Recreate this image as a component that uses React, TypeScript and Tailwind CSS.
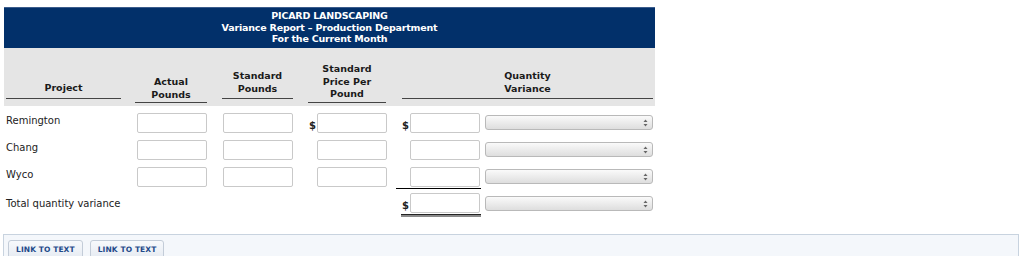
import React from "react";

const cols = "grid grid-cols-[127px_84px_85px_96px_259px]";

function Field({ className = "" }: { className?: string }) {
  return (
    <div
      className={`h-[20px] w-[70px] rounded-[2px] border border-[#c9c9c9] bg-white ${className}`}
    />
  );
}

function Dropdown() {
  return (
    <div className="relative ml-[4px] h-[15px] w-[168px] rounded-[3px] border border-[#b9b9b9] bg-gradient-to-b from-[#fafafa] via-[#ececec] to-[#dedede]">
      <svg
        className="absolute right-[4px] top-[3px]"
        width="5"
        height="8"
        viewBox="0 0 5 8"
      >
        <path d="M0.5 3 L2.5 0.5 L4.5 3 Z" fill="#666" />
        <path d="M0.5 5 L2.5 7.5 L4.5 5 Z" fill="#666" />
      </svg>
    </div>
  );
}

function Dollar() {
  return <span className="w-[8px] pt-[6px] text-[10px] font-semibold leading-none">$</span>;
}

type Row = { name: string; first?: boolean; last?: boolean };

const rows: Row[] = [
  { name: "Remington", first: true },
  { name: "Chang" },
  { name: "Wyco", last: true },
];

export default function App() {
  return (
    <div
      className="relative h-[256px] w-[1024px] overflow-hidden bg-white text-[#222]"
      style={{ fontFamily: '"DejaVu Sans", Verdana, sans-serif' }}
    >
      <div className="ml-[4px] pt-[7px] w-[651px]">
        {/* report title */}
        <div className="flex h-[41px] flex-col items-center border-t border-[#3b5c8c] bg-[#02306a] pt-[2px] text-[9.5px] font-bold leading-[11.5px] text-white tracking-[-0.2px]">
          <span>PICARD LANDSCAPING</span>
          <span>Variance Report – Production Department</span>
          <span>For the Current Month</span>
        </div>

        {/* column headings */}
        <div className={`${cols} h-[58px] bg-[#e5e5e5] text-[9.5px] font-bold leading-[12.5px] text-[#1a1a1a]`}>
          <div className="flex flex-col justify-start pt-[34px]">
            <div className="ml-[2px] w-[115px] border-b border-[#444] pb-[3px] text-center">
              Project
            </div>
          </div>
          <div className="flex flex-col pt-[28px]">
            <div className="ml-[4px] w-[72px] border-b border-[#444] pb-[1px] text-center">
              Actual
              <br />
              Pounds
            </div>
          </div>
          <div className="flex flex-col pt-[22px]">
            <div className="ml-[7px] w-[71px] border-b border-[#444] pb-[3px] text-center">
              Standard
              <br />
              Pounds
            </div>
          </div>
          <div className="flex flex-col pt-[15px]">
            <div className="ml-[8px] w-[78px] border-b border-[#444] pb-[1px] text-center">
              Standard
              <br />
              Price Per
              <br />
              Pound
            </div>
          </div>
          <div className="flex flex-col pt-[22px]">
            <div className="ml-[6px] w-[251px] border-b border-[#444] pb-[3px] text-center">
              Quantity
              <br />
              Variance
            </div>
          </div>
        </div>

        {/* data rows */}
        <div className="pt-[3px] text-[10px]">
          {rows.map((r) => (
            <div key={r.name} className={`${cols} h-[27px] items-center`}>
              <div className="pl-[2px] pb-[4px]">{r.name}</div>
              <div className="pl-[6px]">
                <Field />
              </div>
              <div className="pl-[8px]">
                <Field />
              </div>
              <div className="flex items-center pl-[9px]">
                {r.first ? <Dollar /> : <span className="w-[8px]" />}
                <Field className="w-[68px]" />
              </div>
              <div className="flex items-center">
                <div
                  className={`flex items-center pl-[6px] ${
                    r.last ? "border-b border-black pb-[1px] pt-[2px]" : ""
                  } w-[85px]`}
                >
                  {r.first ? <Dollar /> : <span className="w-[8px]" />}
                  <Field />
                </div>
                <Dropdown />
              </div>
            </div>
          ))}

          <div className={`${cols} h-[27px] items-center`}>
            <div className="col-span-4 pl-[2px]">Total quantity variance</div>
            <div className="flex items-center">
              <div className="ml-[5px] flex w-[80px] flex-col">
                <div className="flex items-center pl-[1px] pt-[3px]">
                  <Dollar />
                  <Field />
                </div>
                <div className="mt-[1px] h-[1px] bg-[#222]" />
                <div className="h-[2px] bg-[#8a8a8a]" />
              </div>
              <Dropdown />
            </div>
          </div>
        </div>
      </div>

      {/* footer links */}
      <div className="absolute left-[3px] top-[234px] h-[40px] w-[1016px] border border-[#c8d3df] bg-[#f4f7fb] pl-[4px] pt-[5px]">
        <div className="flex gap-[7px]">
          {["LINK TO TEXT", "LINK TO TEXT"].map((t, i) => (
            <span
              key={i}
              className="rounded-[3px] border border-[#c3ccd8] bg-gradient-to-b from-[#f7f9fc] to-[#e6ebf2] px-[7px] py-[3px] text-[7.5px] font-bold leading-[11px] tracking-[0.1px] text-[#1f4a8a]"
            >
              {t}
            </span>
          ))}
        </div>
      </div>
    </div>
  );
}
